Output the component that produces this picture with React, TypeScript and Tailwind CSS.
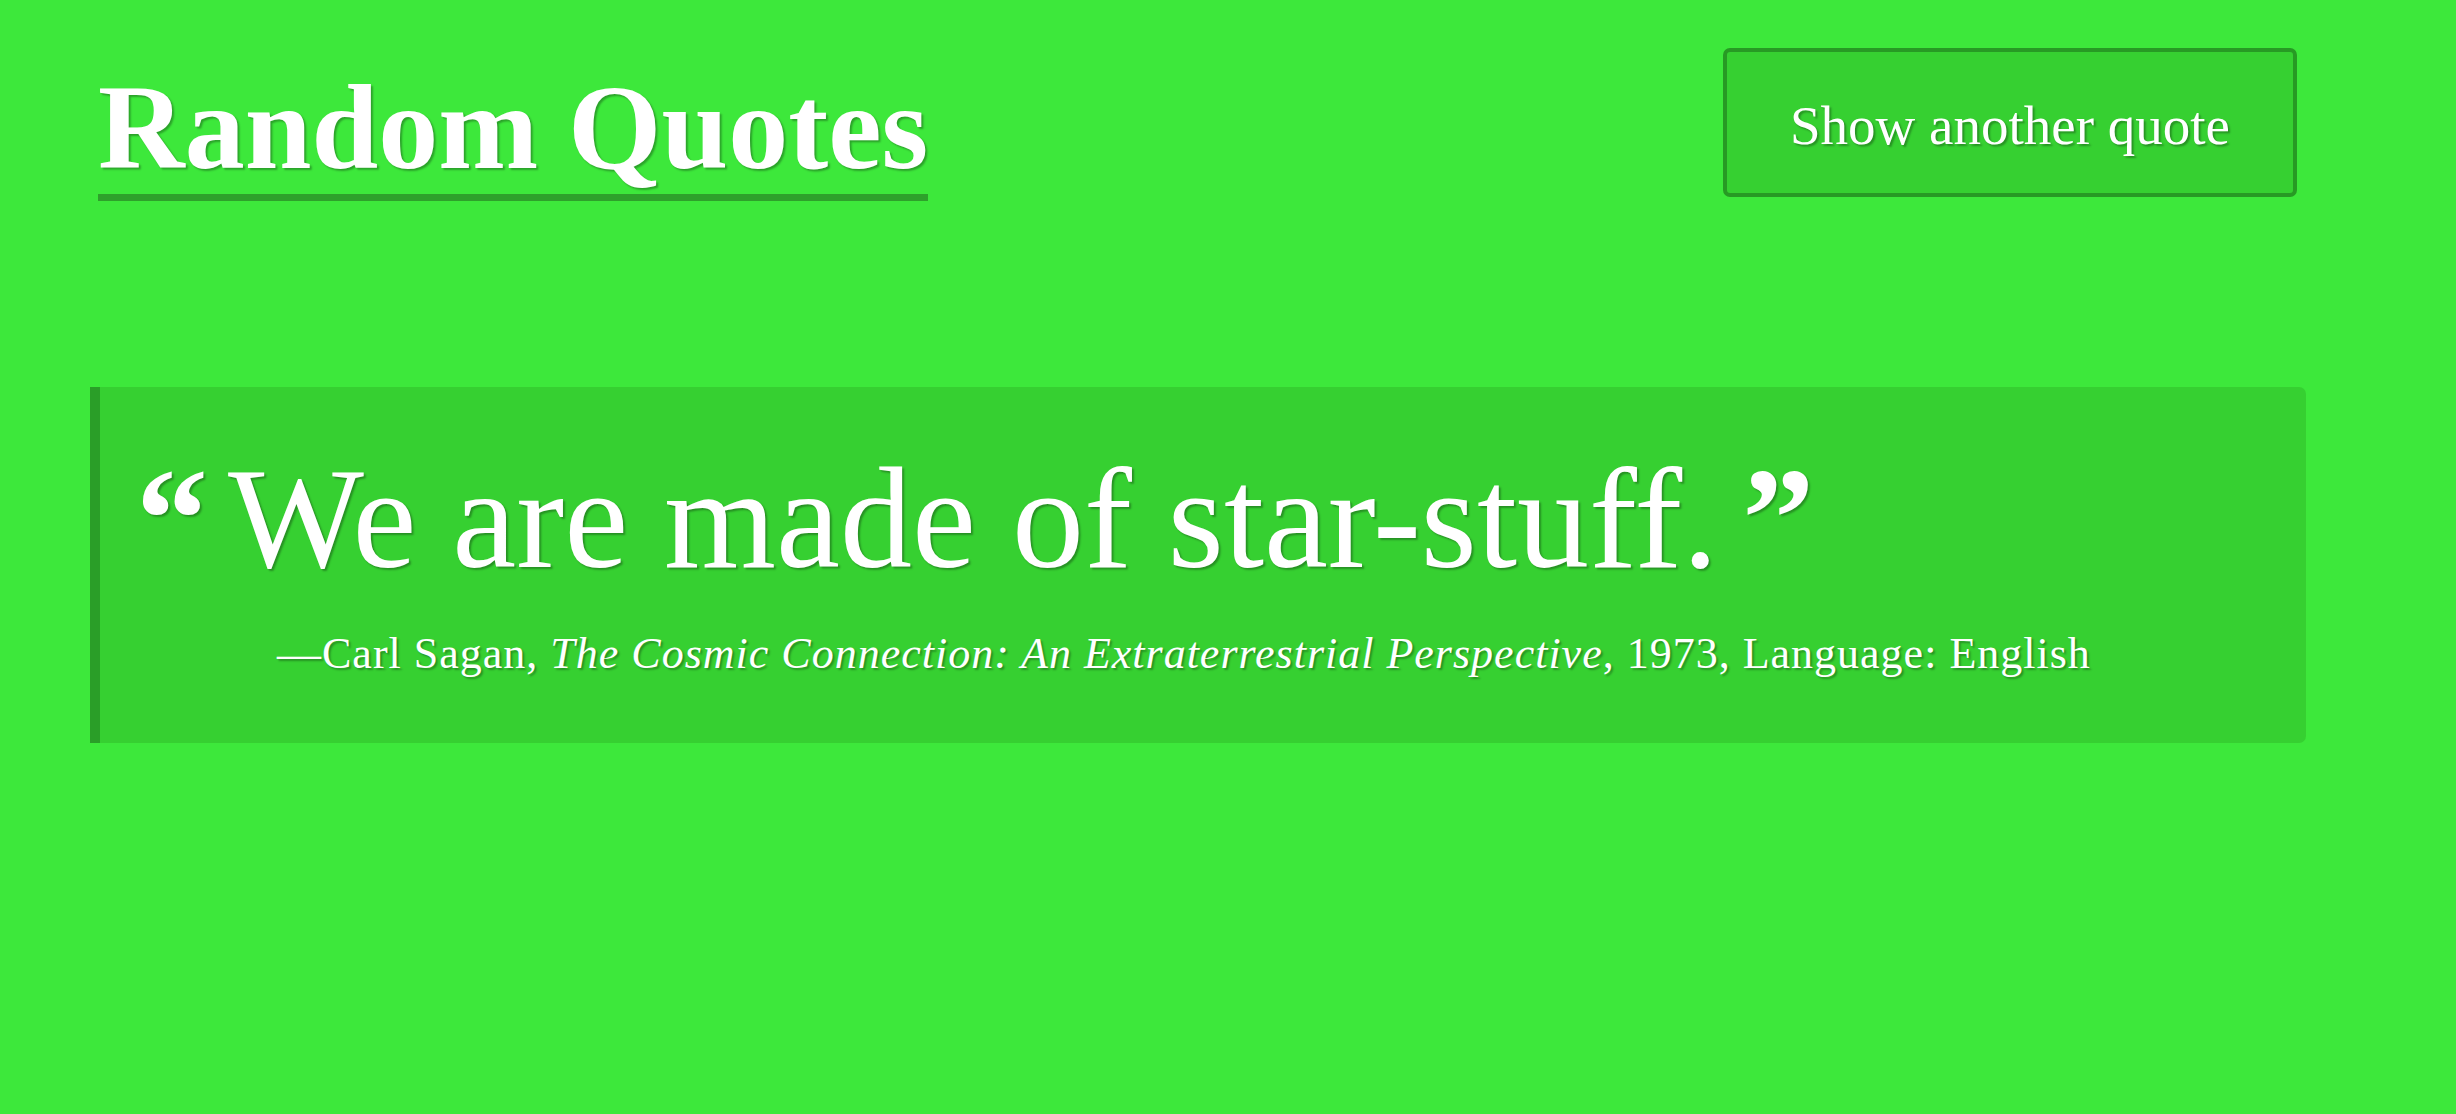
import React from "react";

export default function App() {
  const serif = "font-['Liberation_Serif','Times_New_Roman',serif]";
  const shadow = "[text-shadow:2px_2px_2px_rgba(0,0,0,0.3)]";
  return (
    <div className={`min-h-[1114px] w-full bg-[#3de83b] text-white ${serif}`}>
      <div className="pl-[90px] pr-[150px] pt-[48px]">
        <header className="flex items-start justify-between">
          <h1
            className={`ml-[8px] mt-[20px] border-b-[7px] border-[#2ea12b] pb-[6px] text-[120px] font-bold leading-[120px] ${shadow}`}
          >
            Random Quotes
          </h1>
          <button
            className={`mr-[9px] flex h-[149px] w-[574px] items-center justify-center rounded-[7px] border-[4px] border-[#279a24] bg-[#36d031] pt-[6px] text-[55px] leading-none text-white ${shadow}`}
          >
            Show another quote
          </button>
        </header>
        <blockquote className="mt-[186px] rounded-r-[7px] border-l-[10px] border-[#2a9e28] bg-[#36d031] pb-[56px] pl-[36px] pt-[47px]">
          <p className={`text-[144px] leading-[170px] ${shadow}`}>
            <span className="mr-[20px] font-bold">“</span>
            We are made of star-stuff.
            <span className="ml-[24px] font-bold">”</span>
          </p>
          <p
            className={`mt-[17px] pl-[141px] text-[44px] leading-[66px] tracking-[1px] ${shadow}`}
          >
            —Carl Sagan, <em>The Cosmic Connection: An Extraterrestrial Perspective</em>, 1973, Language: English
          </p>
        </blockquote>
      </div>
    </div>
  );
}
